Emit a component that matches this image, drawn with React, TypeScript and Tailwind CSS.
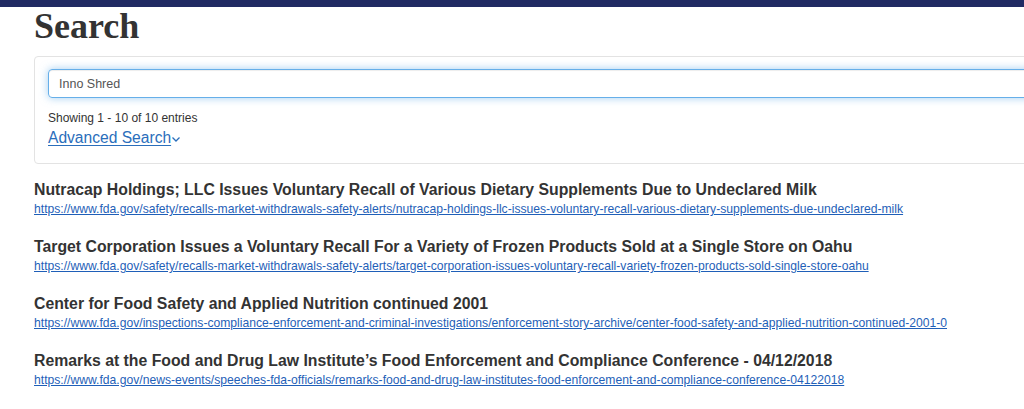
import React from "react";

const results = [
  {
    title: "Nutracap Holdings; LLC Issues Voluntary Recall of Various Dietary Supplements Due to Undeclared Milk",
    url: "https://www.fda.gov/safety/recalls-market-withdrawals-safety-alerts/nutracap-holdings-llc-issues-voluntary-recall-various-dietary-supplements-due-undeclared-milk",
  },
  {
    title: "Target Corporation Issues a Voluntary Recall For a Variety of Frozen Products Sold at a Single Store on Oahu",
    url: "https://www.fda.gov/safety/recalls-market-withdrawals-safety-alerts/target-corporation-issues-voluntary-recall-variety-frozen-products-sold-single-store-oahu",
  },
  {
    title: "Center for Food Safety and Applied Nutrition continued 2001",
    url: "https://www.fda.gov/inspections-compliance-enforcement-and-criminal-investigations/enforcement-story-archive/center-food-safety-and-applied-nutrition-continued-2001-0",
  },
  {
    title: "Remarks at the Food and Drug Law Institute\u2019s Food Enforcement and Compliance Conference - 04/12/2018",
    url: "https://www.fda.gov/news-events/speeches-fda-officials/remarks-food-and-drug-law-institutes-food-enforcement-and-compliance-conference-04122018",
  },
];

const App = () => {
  return (
    <div className="w-[1024px] h-[409px] overflow-hidden bg-white font-['Liberation_Sans',Arial,sans-serif] text-[#333]">
      <div className="h-[7px] bg-[#212a63]" />

      <div className="pl-[34px]">
        <h1 className="font-['Liberation_Serif',serif] font-bold text-[36px] leading-[40px] mt-[-1px] text-[#333]">
          Search
        </h1>

        <div className="mt-[10px] w-[1020px] h-[108px] border border-[#e3e3e3] rounded-[4px] bg-white pl-[13px] pt-[12px]">
          <input
            readOnly
            value="Inno Shred"
            className="block w-[1000px] h-[29px] px-[10px] text-[12.5px] text-[#555] border border-[#66afe9] rounded-[4px] outline-none shadow-[inset_0_1px_1px_rgba(0,0,0,0.075),0_0_8px_rgba(102,175,233,0.6)] font-['Liberation_Sans',Arial,sans-serif]"
          />
          <div className="mt-[12px] text-[12px] leading-[16px] text-[#333]">
            Showing 1 - 10 of 10 entries
          </div>
          <a className="inline-flex items-end text-[15.6px] leading-[20px] text-[#2a6ebb] underline underline-offset-2 cursor-pointer">
            Advanced Search
            <svg width="10" height="10" viewBox="0 0 10 10" className="mb-[4px]">
              <path d="M1.5 3.5 L5 7 L8.5 3.5" fill="none" stroke="#2a6ebb" strokeWidth="1.3" />
            </svg>
          </a>
        </div>

        <div className="mt-[16px] flex flex-col gap-[18px]">
          {results.map((r) => (
            <div key={r.url} className="flex flex-col">
              <h3 className="font-bold text-[15.8px] leading-[20px] text-[#333] whitespace-nowrap">{r.title}</h3>
              <a className="text-[12.15px] leading-[19px] text-[#1f5fb8] underline whitespace-nowrap cursor-pointer">
                {r.url}
              </a>
            </div>
          ))}
        </div>
      </div>
    </div>
  );
};

export default App;
